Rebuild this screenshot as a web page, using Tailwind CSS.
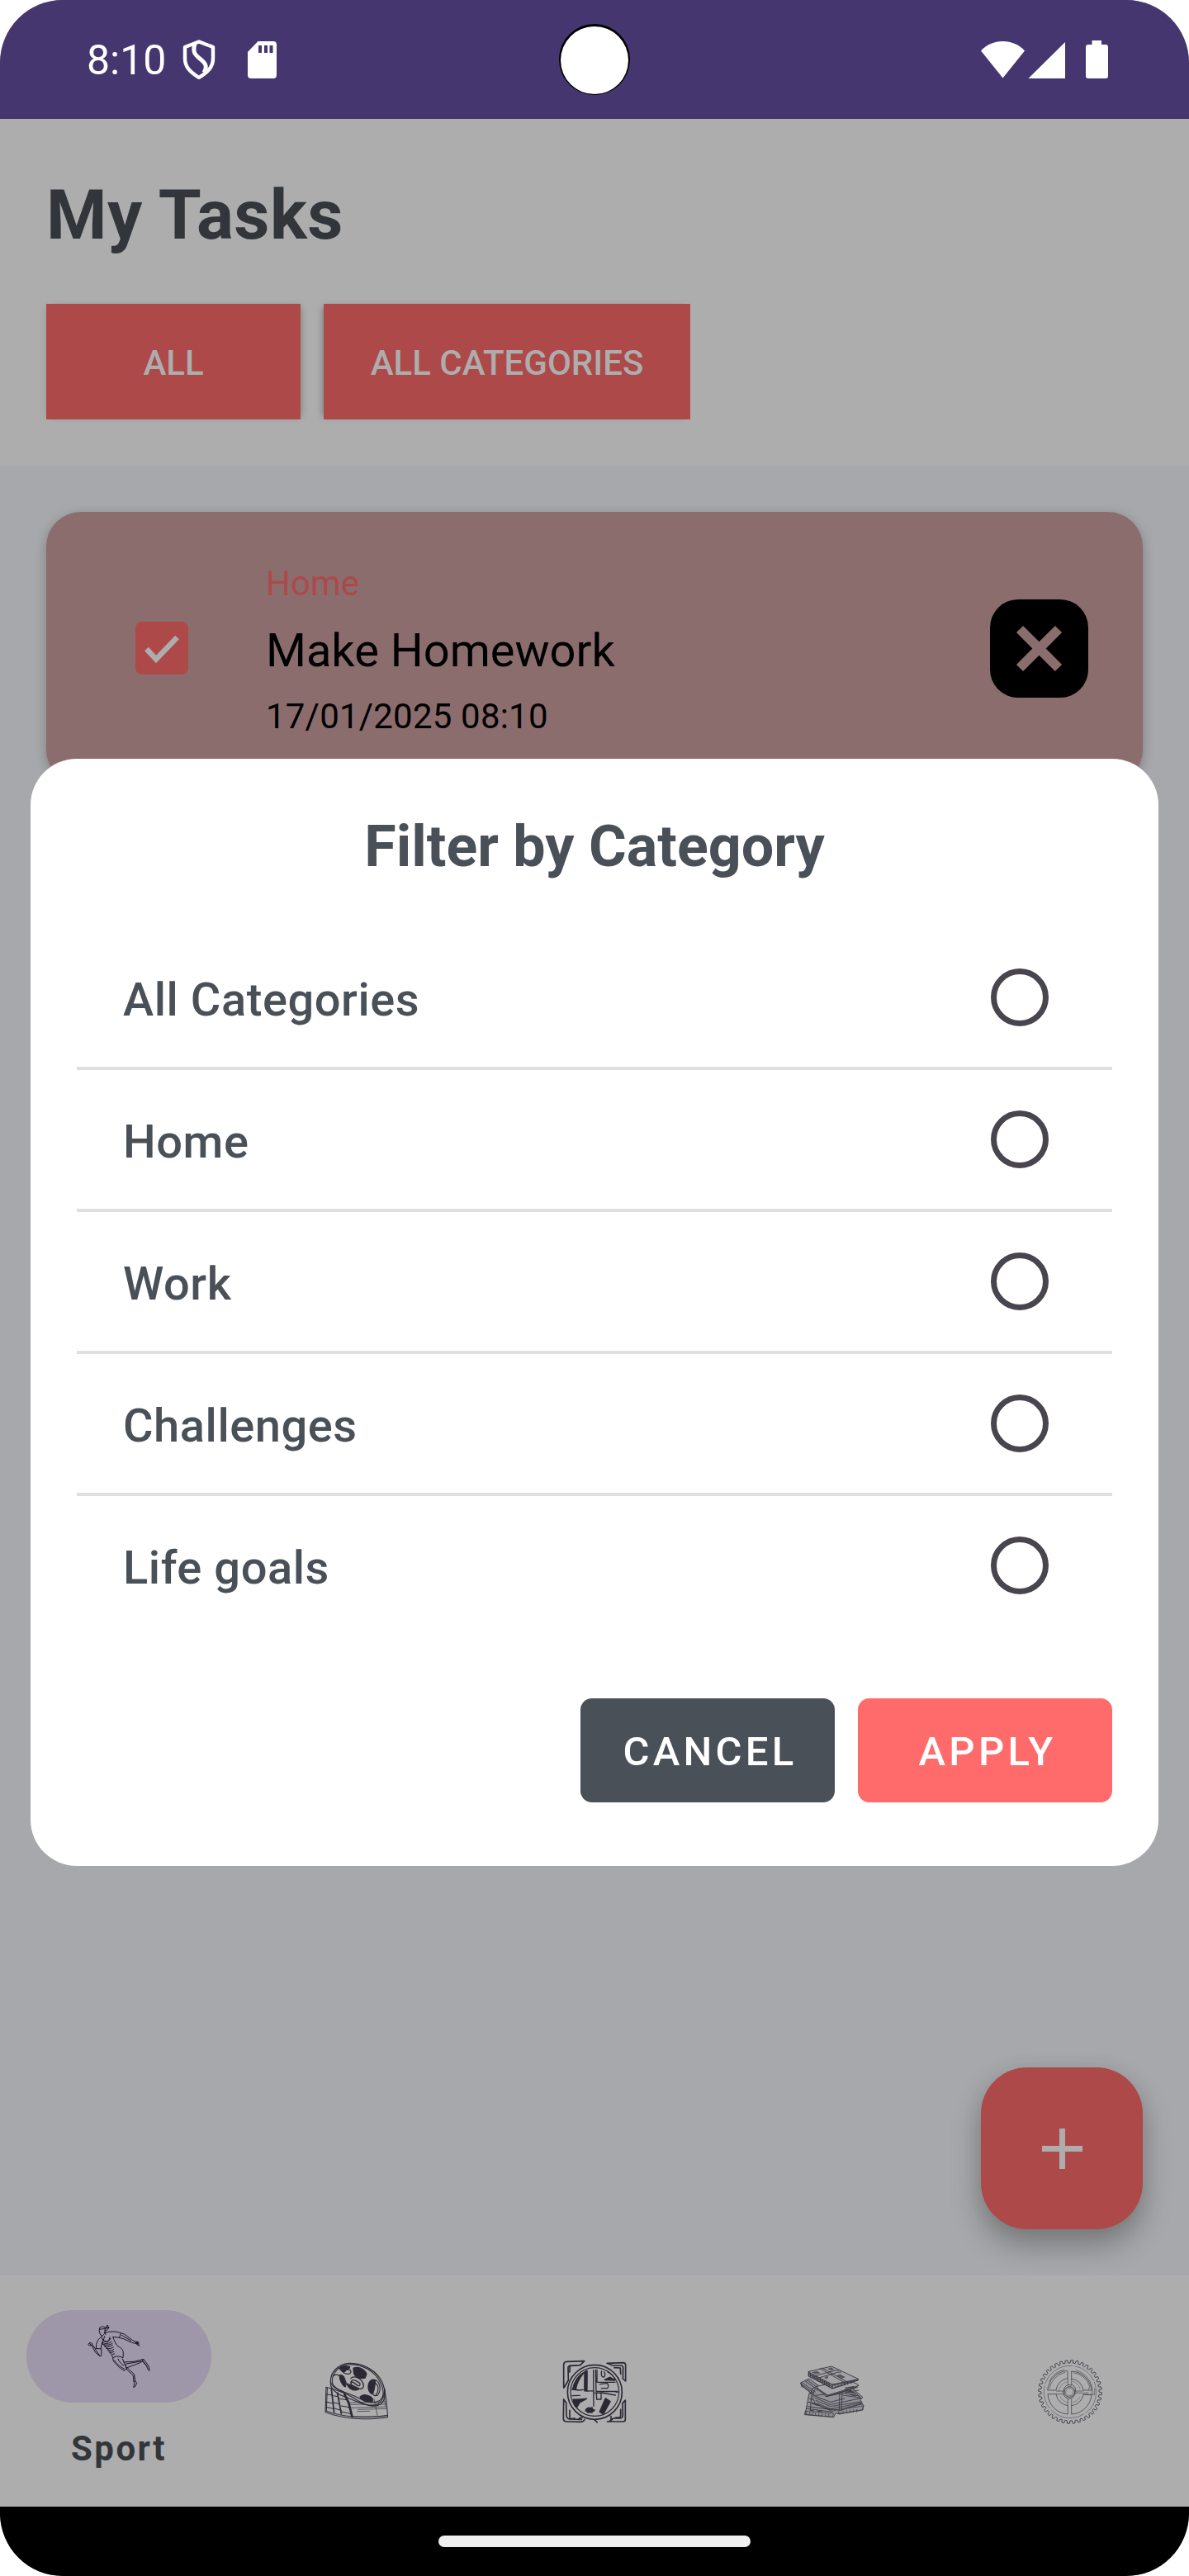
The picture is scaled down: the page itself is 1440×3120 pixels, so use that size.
<!DOCTYPE html>
<html lang="en">
<head>
<meta charset="utf-8">
<title>My Tasks</title>
<script src="https://cdn.jsdelivr.net/npm/@tailwindcss/browser@4"></script>
</head>
<body class="bg-white">
<div class="relative flex h-[3120px] w-[1440px] flex-col overflow-hidden rounded-[76px] bg-[#a6a8ab] font-[Roboto,sans-serif]">

  <!-- Status bar -->
  <div class="relative flex h-36 shrink-0 items-center justify-between bg-[#463670] pr-[98px] pl-[105px] text-white">
    <div class="flex items-center">
      <span class="w-[116px] pt-0.5 text-[50px] leading-[60px]">8:10</span>
      <svg class="h-12 w-10" viewBox="0 0 40 48" fill="none" stroke="#fff" stroke-width="4.4" stroke-linejoin="round"><path d="M20 2.5 37 9v14c0 10-6 16-17 23C9 39 3 33 3 23V9z"/><path d="M15 5c-3 10 0 13 6 18 8 6 9 10 5 17" stroke-width="5"/></svg>
      <svg class="ml-[39px] h-[45px] w-[35px]" viewBox="0 0 35 45" fill="#fff"><path fill-rule="evenodd" d="M12.500 0H31a4 4 0 0 1 4 4v37a4 4 0 0 1-4 4H4a4 4 0 0 1-4-4V13zM13 5v9h4V5zm7 0v9h4V5zm6.500 0v9h4V5z"/></svg>
    </div>
    <div class="flex items-center">
      <svg class="h-[46px] w-[154px]" viewBox="0 0 154 46" fill="#fff"><path d="M0 12.500C7 5 16 1 26.500 1S46 5 53 12.500L26.500 45.500z"/><path d="M57.500 46 102 2v44z"/><path d="M134.500 0h11.500v5h5a3 3 0 0 1 3 3v35a3 3 0 0 1-3 3h-21a3 3 0 0 1-3-3V8a3 3 0 0 1 3-3h4.500z"/></svg>
    </div>
    <div class="absolute top-[29px] left-[677px] flex size-[86px] items-end justify-center rounded-full bg-black pb-px"><div class="size-[82px] rounded-full bg-white"></div></div>
  </div>

  <!-- Header with filters -->
  <header class="h-[420px] shrink-0 bg-[#adadad] px-14 pt-[67px]">
    <h1 class="text-[84px] leading-[100px] font-bold tracking-[0.400px] text-[#32363b]">My Tasks</h1>
    <div class="mt-[57px] flex gap-7 text-[42px] font-medium text-[#adadad]">
      <button class="h-[140px] w-[308px] bg-[#ad4949] pt-0.5 shadow-[5px_0_8px_-4px_rgba(0,0,0,0.25),-5px_0_8px_-4px_rgba(0,0,0,0.1)]">ALL</button>
      <button class="h-[140px] w-[444px] bg-[#ad4949] pt-0.5 shadow-[-5px_0_8px_-4px_rgba(0,0,0,0.3)]">ALL CATEGORIES</button>
    </div>
  </header>

  <!-- Task list -->
  <main class="flex flex-1 flex-col justify-between p-14">
    <article class="flex h-[330px] items-center rounded-[42px] bg-[#8b6d6d] pr-[66px] pl-[108px] shadow-[0_4px_14px_rgba(0,0,0,0.25)]">
      <svg class="size-16" viewBox="0 0 64 64"><rect width="64" height="64" rx="8" fill="#ad4949"/><path d="M13.500 33 25 45.500 50.500 19" fill="none" stroke="#adadad" stroke-width="6.500"/></svg>
      <div class="ml-[94px] flex-1 pt-1">
        <p class="text-[42px] leading-[80px] text-[#ad4949]">Home</p>
        <p class="text-[56px] leading-[82px] text-black">Make Homework</p>
        <p class="text-[42px] leading-[78px] tracking-[0.200px] text-black">17/01/2025 08:10</p>
      </div>
      <svg class="size-[119px]" viewBox="0 0 119 119"><rect width="119" height="119" rx="34" fill="#000"/><path d="m36 36 47 47m0-47-47 47" stroke="#8b6d6d" stroke-width="11.500"/></svg>
    </article>
    <button class="flex size-[196px] items-center justify-center self-end rounded-[56px] bg-[#ad4949] shadow-[0_20px_36px_rgba(0,0,0,0.27),0_0_24px_rgba(0,0,0,0.06)]">
      <svg class="size-[49px]" viewBox="0 0 49 49" stroke="#adadad" stroke-width="7"><path d="M24.500 0v49M0 24.500h49"/></svg>
    </button>
  </main>

  <!-- Bottom navigation -->
  <nav class="grid h-[280px] shrink-0 grid-cols-5 bg-[#adadad]">
    <a class="flex flex-col items-center pt-[42px]">
      <span class="h-28 w-56 rounded-full bg-[#9e97a9]">
        <svg class="h-28 w-56" viewBox="96 114 672 336" fill="none" stroke="#17131f" stroke-width="3" stroke-linecap="round" stroke-linejoin="round">
          <path d="M361 179c5-6 15-7 21-2l-1 17c-2 8-6 12-10 12l-7-3-2-11-2-4 2-5zM361 184l21-3M382 181l8-13 2 5-6 8 10-6-2 5-8 9-5-1M371 206l-1 7M381 194l2 8"/>
          <path d="M370 210c-10 6-18 15-20 29l-1 14 17 2 4-20 6-13 4-13M349 253l-3 2 17 26 5-1 1-25M346 254l-10-14M363 281l-16-13-13-25M321 238c1-6 8-7 14-3l-2 7-7 1zM326 235l5 7"/>
          <path d="M383 196c16-6 35-5 51-1l4 4-4 15-24-3c5 13 9 24 18 34 13 5 20 14 20 25l-1 17c-10-6-24-7-33-2l-4 2c-6-18-20-36-40-53M438 197l14 4 30 23 16 7-1 5-18-4-28-13-17-5M442 205l34 20M496 229l7 1 2 14-5-5-5-3zM500 232l-1 8"/>
          <path d="M371 216c0 13 20 17 25 7l3-11M375 221c5 10 21 11 27-4M371 231c12 8 28 5 35-4M373 237c10 6 27 4 35-2M379 245c13 4 23 0 30-4M386 253c8 3 20 0 26-4M392 261c8 2 16-1 21-4M398 269l16-4M409 274l7-1"/>
          <path d="M410 288l2 11c7 9 24 28 40 35l8-9-15-34M415 296c13 17 23 25 36 31M429 291c5 12 10 17 20 24"/>
          <path d="M450 303l35-2 31-7 5 4-14 8-48 18-4-14M459 309l53-9M517 293l5-1 18 25 3 18-5-5-6-14-15-17M521 301l14 17"/>
          <path d="M459 327c6 10 17 14 25 25l2 21M463 324c8 8 18 15 25 24l3 24M486 372l3 8-4 14 6-2 6-13-5-7"/>
        </svg>
      </span>
      <span class="mt-[31px] text-[42px] leading-[50px] font-bold tracking-[2.400px] text-[#32363b]">Sport</span>
    </a>
    <a class="flex items-center justify-center">
      <svg class="size-[130px]" viewBox="-9 0 390 390" fill="none" stroke="#2c2834" stroke-width="3.500" stroke-linecap="round" stroke-linejoin="round">
        <path d="M91 159c1-35 28-61 66-65 55-2 103 29 122 70 16 38 11 68-8 80-22 13-57 2-87-18-35-25-92-38-93-67z"/>
        <path d="M97 160c0-32 24-58 59-61 49-4 97 25 116 65 17 33 11 58-4 66-16 9-43 9-72-8-38-22-99-29-99-62zM91 160l1 17c13 26 42 36 67 45 27 10 53 27 84 26 31-5 46-28 44-61"/>
        <g fill="#2c2834"><path d="M123 112c10-9 25-9 38-5l-5 11c-5-2-11 1-12 6-5 2-14-2-21-12zM174 112c13-8 37 0 48 20l-5 15c-14 6-42-3-42-22zM123 138c10-4 19 4 20 15l5 14-3 13c-11-4-21-24-22-42zM228 175c2-18 14-25 26-20-2 20-2 37-11 51-9-3-17-15-15-31zM198 216c12-13 27-6 38-1 9 6 9 14 6 19-17 3-39-4-44-18zM151 168c14 3 27 14 43 20-14 9-38 2-43-20z"/></g>
        <path d="M165 149c8-11 28-4 39 9 15 21 3 34-12 27l-22-11c-8-3-5-14 3-11l17 12c8 4 12-6 4-11l-12-7c-12-6-20 3-17 13" stroke-width="4"/>
        <path d="M161 117c7 8 4 16-7 16-14-1-22-8-23-17M255 155c17 10 21 37 7 55-8 5-17 0-17-6M253 166c14 9 14 27 3 43M103 139c11-9 28 2 34 17"/>
        <path d="M75 181l-3 91c68 26 154 30 227 18l-5-59-7-45M79 184l-3 84M75 181l20 5 47 17M115 200l7 30M74 206l22 4M73 234l27 6M74 253l27 6M101 212l16 3M103 237l22 5M105 258l25 7M125 223l24 4M129 249l30 5M131 270l39 9M74 267c60 23 142 29 223 16" stroke-width="3"/>
        <path d="M94 187l10 86M116 202l14 75" stroke-width="5"/>
        <path d="M142 207l15 31 12 49" stroke-width="8"/>
        <path d="M159 237l132-3M160 244l133-1M167 256l128-4M190 262l105-3M188 269l45-1M171 288l126 0M249 224l12 59M286 205l4 45" stroke-width="2"/>
      </svg>
    </a>
    <a class="flex items-center justify-center">
      <svg class="size-[130px]" viewBox="-15 0 390 390" fill="none" stroke="#2c2834" stroke-width="5" stroke-linecap="round" stroke-linejoin="round">
        <path d="M68 183V100c0-8 5-12 12-12l63-2-15 15-39 2-5 5 1 48-16 27M90 126l1-23 29-1M225 94l59-2c6 0 9 4 9 9v58l-10-9 1-39c0-5-3-9-8-9h-30zM252 110l22 1 1 22M68 225l-1 69c0 8 4 12 12 12l51 1c8 0 12-4 14-8M68 225l9 12 1 45c0 10 3 14 12 15l43 1M90 265v24c0 5 3 7 7 7l11-2M226 306h59c5 0 7-4 7-8v-70l-10 11 1 43c0 10-6 12-12 12h-22l-16 12M275 262v21c0 8-4 8-10 8h-8M124 294l12-3M180 299l10 10M240 287v15"/>
        <circle cx="181" cy="199" r="99"/><circle cx="181" cy="198" r="88" stroke-width="3.500"/>
        <path d="M99 189l24 3 16-2M99 212l28-1M145 126v58M153 122l-1 73 26-1M176 119l1 131M184 118l2 78h78M189 118v45h66M206 122c-3 11-1 22 6 22s8-11 3-19M199 170l25-3c7 0 8 13 3 18h-22M177 202h27v23h-16l-1-22M205 201l51 9" stroke-width="4"/>
        <g fill="#2c2834"><path d="M145 125l7-4v73h-8zM103 226c18 0 33-1 48-3l-25 13-11 19c-9-8-12-19-12-29zM220 222l17 11-25 45-13-8zM101 188c5-25 18-47 40-60-15 18-27 36-29 61zM237 145l16 11-35-2zM151 260l9-5 4 4 7-4 1 6 8 4-8 4-1 4-8-2-7 2-3-4-5-3z"/></g>
        <path d="M227 126c14 7 23 16 28 29l-14-4M186 198l64-1 15 3" stroke-width="3"/>
      </svg>
    </a>
    <a class="flex items-center justify-center">
      <svg class="size-[130px]" viewBox="9 0 390 390" fill="#929196" stroke="#3b3842" stroke-width="2.800" stroke-linecap="round" stroke-linejoin="round">
        <path d="M120 203l-15 77 104 10 7-15 12 3 86-14 4-18-40-14z"/>
        <path d="M107 268l101 8-2 13-102-8zM225 263l91-14-1 14-86 15zM110 272l-1 9m13-8v9m11-9v10m10-8v8m12-8v9m12-8v9m12-9v9m12-8v9m40-16v10m12-13v10m13-12v10m12-11v10m13-11v9m12-10v9" fill="none" stroke-width="2.200"/>
        <path d="M129 206l-5 60M113 251l93 12M112 259l92 12M118 235l43 10M120 222l12 5" fill="none"/>
        <path d="M137 206l62-17 65-15 51 44-10 9 9 13-79 25-61-9-32-16-8-18z"/>
        <path d="M141 219l56 25 112-23M144 229l54 22 111-18M148 239l50 21 110-22M153 246l50 22 106-26M141 213l56 22 52-13M240 188l-3 78M231 190l-2 75" fill="none"/>
        <path d="M89 165l31-15 41 30 38 25-61 6-44-34z"/>
        <path d="M91 174l43 33M92 170l46 33M95 165l47 33M106 159l46 33M112 155l45 32M134 207l5-17 22-10M127 203l4-17 19-9M91 166l2 14" fill="none"/>
        <path d="M147 178l113-24 39 18-8 9-88 29-22 5-28-28z" fill="#a4a3a6"/>
        <path d="M150 186l38 24 111-34M153 191l35 22 107-31M180 214l119-22M247 191l41 11 20 18-66-10M249 203l51 10M253 197l37 7" fill="none"/>
        <path d="M119 124l82-19 99 47-95 33-87-44z" fill="#a3a2a5"/>
        <path d="M118 124l1 17 85 45 94-30M120 127l84 44 94-19M121 132l82 43 93-20M122 137l81 42M159 113l91 52M168 111l90 51M144 139l63-17 23-3M155 147l68-20 13-1M205 170v15M214 170v13M225 168v12M237 166v11M248 163v11M260 161v10M273 159v8" fill="none"/>
        <path d="M132 127l17-3 9 5-14 3zM190 113l10-3 9 6-11 3zM178 145l9-4 1 7-9 1zM221 139l11-4 17 9-12 5z" fill="#5b5860" stroke-width="1.500"/>
        <path d="M124 131v10M131 135v11M138 139v11M145 142v12M152 146v12M160 150v12M168 154v12M176 158v12M184 162v12M192 166v13M253 190l20 3M251 184l31-5M270 208l20 4M125 264l11 3M131 240l20 7M149 267l18 3" fill="none" stroke-width="3.500"/>
      </svg>
    </a>
    <a class="flex items-center justify-center">
      <svg class="size-[130px]" viewBox="3 0 390 390" fill="none" stroke="#45434d" stroke-width="2.400" stroke-linejoin="round">
        <path id="gear-teeth" stroke-width="3"/>
        <circle cx="198" cy="198" r="95" stroke-dasharray="90 5 130 7" stroke-width="1.600"/>
        <path d="M182 122a77 77 0 0 0-66 70h31a48 48 0 0 1 42-43v-27zM203 123a77 77 0 0 1 73 69h-30a49 49 0 0 0-43-42zM117 206h30a49 49 0 0 0 43 42v31a77 77 0 0 1-73-73zM203 279v-31a49 49 0 0 0 43-40h30a77 77 0 0 1-73 71z"/>
        <path d="M178 117a84 84 0 0 0-56 43M122 187a76 76 0 0 1 58-60M209 128a71 71 0 0 1 60 50l-4 12M218 119a83 83 0 0 1 60 62v27M287 185v23h-42M190 149v26M203 149v25M203 223v25M190 223v25M147 195h28M147 206h30M247 195h-31M265 202h-48" stroke-width="2"/>
        <path d="M157 197a39 39 0 0 1 31-36M205 159a39 39 0 0 1 29 28M162 215a38 38 0 0 0 27 21M207 236a38 38 0 0 0 27-21" stroke-width="1.200"/>
        <path d="M187 173h20l9 9 3 18-10 17-15 7-15-8-7-16 5-17z" stroke-width="2.500"/>
        <circle cx="196" cy="198" r="19" stroke-width="3"/><circle cx="196" cy="198" r="14" stroke-width="1.600"/>
      </svg>
    </a>
  </nav>

  <!-- System gesture bar -->
  <div class="flex h-[84px] shrink-0 items-center justify-center bg-black"><div class="h-3.5 w-[378px] rounded-full bg-[#f0f0f0]"></div></div>

  <!-- Category dialog -->
  <section class="absolute top-[919px] left-[37px] flex h-[1341px] w-[1366px] flex-col rounded-[56px] bg-white px-14 pt-[65px] text-[#495057]">
    <h2 class="text-center text-[70px] leading-[82px] font-bold">Filter by Category</h2>
    <ul class="mt-[58px] divide-y-4 divide-[#e0e0e0] text-[56px] font-medium tracking-[0.560px]">
      <li class="flex h-[172px] items-center justify-between pr-[77px] pl-14"><span class="pt-[5px]">All Categories</span><span class="size-[70px] rounded-full border-7 border-[#49454f]"></span></li>
      <li class="flex h-[172px] items-center justify-between pr-[77px] pl-14"><span class="pt-[5px]">Home</span><span class="size-[70px] rounded-full border-7 border-[#49454f]"></span></li>
      <li class="flex h-[172px] items-center justify-between pr-[77px] pl-14"><span class="pt-[5px]">Work</span><span class="size-[70px] rounded-full border-7 border-[#49454f]"></span></li>
      <li class="flex h-[172px] items-center justify-between pr-[77px] pl-14"><span class="pt-[5px]">Challenges</span><span class="size-[70px] rounded-full border-7 border-[#49454f]"></span></li>
      <li class="flex h-[168px] items-center justify-between pr-[77px] pl-14"><span class="pt-[5px]">Life goals</span><span class="size-[70px] rounded-full border-7 border-[#49454f]"></span></li>
    </ul>
    <div class="mt-[77px] flex justify-end gap-7 text-[49px] font-medium tracking-[4.300px] text-white">
      <button class="h-[126px] w-[308px] rounded-[14px] bg-[#495057] pt-1 pl-1.5">CANCEL</button>
      <button class="h-[126px] w-[308px] rounded-[14px] bg-[#ff6b6b] pt-1 pl-1.5">APPLY</button>
    </div>
  </section>
</div>
<script>
  // Outline of the gear: 36 square teeth around a common centre
  var teeth = 36, d = '';
  for (var i = 0; i < teeth; i++) {
    [[0, 105], [0.12, 115], [0.5, 115], [0.62, 105]].forEach(function (p) {
      var a = (i + p[0]) / teeth * Math.PI * 2;
      d += (d ? 'L' : 'M') + (198 + Math.cos(a) * p[1]).toFixed(1) + ' ' + (198 + Math.sin(a) * p[1]).toFixed(1);
    });
  }
  document.getElementById('gear-teeth').setAttribute('d', d + 'Z');
</script>
</body>
</html>
